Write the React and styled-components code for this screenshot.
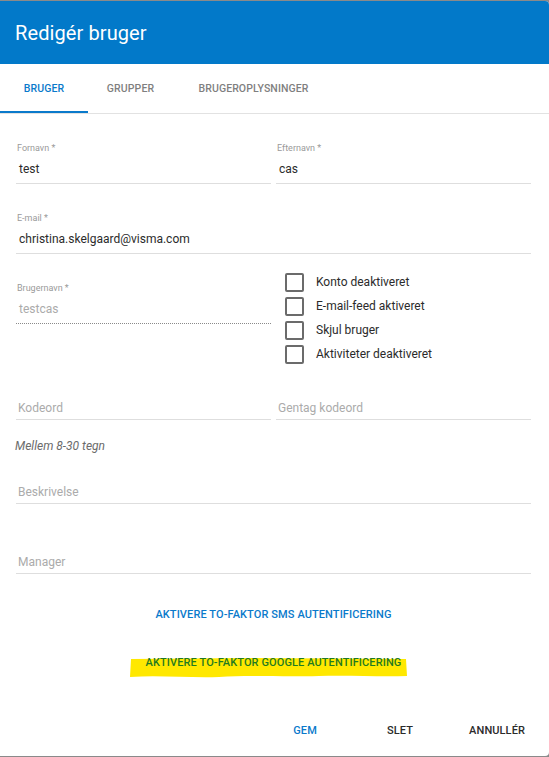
import React from 'react'
import styled, { createGlobalStyle } from 'styled-components'

const GlobalStyle = createGlobalStyle`
    html, body {
        margin: 0;
        padding: 0;
        background: #8a8a8a;
    }
    body {
        font-family: Roboto, "Liberation Sans", sans-serif;
        -webkit-font-smoothing: antialiased;
    }
`

const Dialog = styled.div`
    width: 549px;
    height: 755px;
    margin-top: 1px;
    background: #fff;
    border-radius: 0 4px 4px 0;
    overflow: hidden;
    display: flex;
    flex-direction: column;
`

const Header = styled.div`
    height: 63px;
    background: #0279c9;
    display: flex;
    align-items: center;
    padding-left: 15px;
    flex-shrink: 0;
`

const Title = styled.h1`
    margin: 0;
    color: #fff;
    font-size: 20px;
    font-weight: 400;
    letter-spacing: 0.1px;
`

const TabBar = styled.div`
    height: 49px;
    display: flex;
    border-bottom: 1px solid #e2e2e2;
    flex-shrink: 0;
`

const Tab = styled.div`
    display: flex;
    align-items: center;
    justify-content: center;
    width: ${p => p.$width}px;
    font-size: 10.5px;
    font-weight: 500;
    letter-spacing: 0.1px;
    text-transform: uppercase;
    color: ${p => (p.$active ? '#0a7acb' : '#7f7f7f')};
    box-shadow: ${p => (p.$active ? 'inset 0 -2px 0 #0a7acb' : 'none')};
`

const Form = styled.div`
    padding: 28px 18px 0 16px;
    display: flex;
    flex-direction: column;
`

const Row = styled.div`
    display: grid;
    grid-template-columns: 255px 1fr;
    column-gap: 5px;
    margin-top: ${p => p.$top || 0}px;
    align-items: start;
`

const Field = styled.div`
    display: flex;
    flex-direction: column;
    border-bottom: 1px ${p => (p.$dotted ? 'dotted #8a8a8a' : 'solid #dedede')};
    padding-bottom: ${p => (p.$placeholder ? 1 : 4)}px;
    margin-top: ${p => p.$top || 0}px;
`

const Label = styled.label`
    font-size: 9px;
    line-height: 12px;
    color: #9a9a9a;
    margin: 0 1px 5px;
`

const Value = styled.div`
    font-size: 12px;
    line-height: 20px;
    padding-left: 3px;
    color: ${p => (p.$muted ? '#ababab' : '#2b2b2b')};
`

const Placeholder = styled.div`
    font-size: 12px;
    line-height: 20px;
    padding-left: 2px;
    color: #ababab;
`

const Checks = styled.div`
    display: flex;
    flex-direction: column;
    gap: 6px;
    padding-left: 9px;
`

const CheckItem = styled.label`
    display: flex;
    align-items: center;
    height: 18px;
    gap: 12px;
    font-size: 12px;
    color: #2b2b2b;
`

const Box = styled.span`
    width: 15px;
    height: 15px;
    border: 2px solid #6b6b6b;
    border-radius: 2px;
    flex-shrink: 0;
`

const Hint = styled.div`
    font-size: 12px;
    line-height: 16px;
    font-style: italic;
    color: #6b6b6b;
    margin: 18px 0 0 -1px;
`

const LinkRow = styled.div`
    display: flex;
    justify-content: center;
    margin-top: ${p => p.$top}px;
    padding-right: 2px;
`

const LinkButton = styled.span`
    position: relative;
    font-size: 11px;
    line-height: 16px;
    font-weight: 500;
    letter-spacing: 0.1px;
    text-transform: uppercase;
    color: ${p => p.$color};
`

const LinkText = styled.span`
    position: relative;
`

const Highlight = styled.svg`
    position: absolute;
    left: -17px;
    top: 2px;
    width: 278px;
    height: 21px;
`

const Footer = styled.div`
    margin-top: auto;
    height: 44px;
    display: flex;
    justify-content: flex-end;
    align-items: flex-start;
    padding-right: 8px;
`

const Button = styled.button`
    border: none;
    background: none;
    font-family: inherit;
    min-width: 64px;
    height: 36px;
    padding: 0 16px;
    margin-left: ${p => p.$gap || 0}px;
    font-size: 11px;
    font-weight: 500;
    letter-spacing: 0.1px;
    text-transform: uppercase;
    color: ${p => (p.$primary ? '#0a7acb' : '#2b2b2b')};
`

const options = ['Konto deaktiveret', 'E-mail-feed aktiveret', 'Skjul bruger', 'Aktiviteter deaktiveret']

export default function App() {
    return (
        <>
            <GlobalStyle />
            <Dialog>
                <Header>
                    <Title>Redigér bruger</Title>
                </Header>
                <TabBar>
                    <Tab $width={88} $active>Bruger</Tab>
                    <Tab $width={85}>Grupper</Tab>
                    <Tab $width={161}>Brugeroplysninger</Tab>
                </TabBar>
                <Form>
                    <Row>
                        <Field>
                            <Label>Fornavn *</Label>
                            <Value>test</Value>
                        </Field>
                        <Field>
                            <Label>Efternavn *</Label>
                            <Value>cas</Value>
                        </Field>
                    </Row>
                    <Field $top={28}>
                        <Label>E-mail *</Label>
                        <Value>christina.skelgaard@visma.com</Value>
                    </Field>
                    <Row $top={19}>
                        <Field $top={9} $dotted>
                            <Label>Brugernavn *</Label>
                            <Value $muted>testcas</Value>
                        </Field>
                        <Checks>
                            {options.map(o => (
                                <CheckItem key={o}>
                                    <Box />
                                    {o}
                                </CheckItem>
                            ))}
                        </Checks>
                    </Row>
                    <Row $top={35}>
                        <Field $placeholder>
                            <Placeholder>Kodeord</Placeholder>
                        </Field>
                        <Field $placeholder>
                            <Placeholder>Gentag kodeord</Placeholder>
                        </Field>
                    </Row>
                    <Hint>Mellem 8-30 tegn</Hint>
                    <Field $placeholder $top={28}>
                        <Placeholder>Beskrivelse</Placeholder>
                    </Field>
                    <Field $placeholder $top={48}>
                        <Placeholder>Manager</Placeholder>
                    </Field>
                </Form>
                <LinkRow $top={33}>
                    <LinkButton $color="#0a7acb">Aktivere to-faktor SMS autentificering</LinkButton>
                </LinkRow>
                <LinkRow $top={32}>
                    <LinkButton $color="#1f7a22">
                        <Highlight viewBox="0 0 278 21" preserveAspectRatio="none">
                            <path
                                d="M2 2 L120 1 L277 2 L278 19 C250 20 220 18 190 19 C150 20 120 18 90 20 C60 21 30 18 1 20 Z"
                                fill="#ffe800"
                            />
                        </Highlight>
                        <LinkText>Aktivere to-faktor Google autentificering</LinkText>
                    </LinkButton>
                </LinkRow>
                <Footer>
                    <Button $primary>Gem</Button>
                    <Button $gap={31}>Slet</Button>
                    <Button $gap={21}>Annullér</Button>
                </Footer>
            </Dialog>
        </>
    )
}
